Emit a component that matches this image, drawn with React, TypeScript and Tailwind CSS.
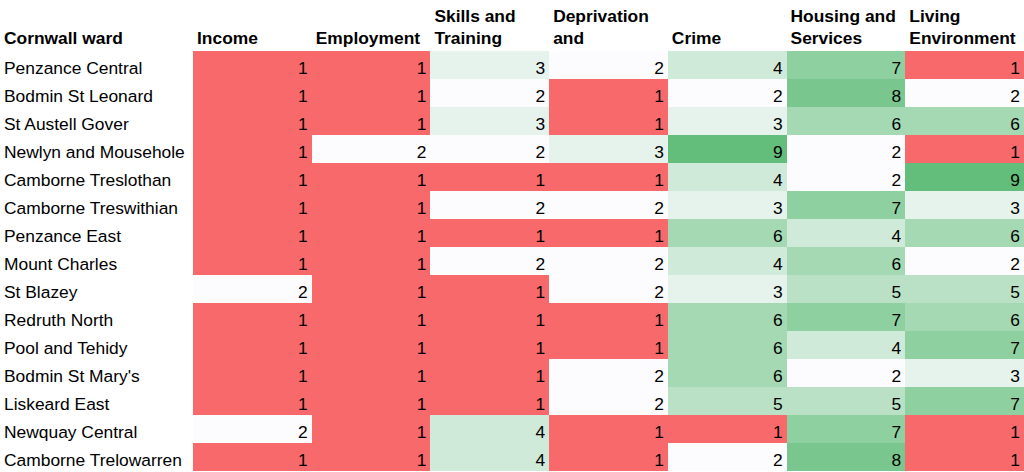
const columns: string[][] = [
  ["Income"],
  ["Employment"],
  ["Skills and", "Training"],
  ["Deprivation", "and"],
  ["Crime"],
  ["Housing and", "Services"],
  ["Living", "Environment"],
];

const rows: [string, number[]][] = [
  ["Penzance Central", [1, 1, 3, 2, 4, 7, 1]],
  ["Bodmin St Leonard", [1, 1, 2, 1, 2, 8, 2]],
  ["St Austell Gover", [1, 1, 3, 1, 3, 6, 6]],
  ["Newlyn and Mousehole", [1, 2, 2, 3, 9, 2, 1]],
  ["Camborne Treslothan", [1, 1, 1, 1, 4, 2, 9]],
  ["Camborne Treswithian", [1, 1, 2, 2, 3, 7, 3]],
  ["Penzance East", [1, 1, 1, 1, 6, 4, 6]],
  ["Mount Charles", [1, 1, 2, 2, 4, 6, 2]],
  ["St Blazey", [2, 1, 1, 2, 3, 5, 5]],
  ["Redruth North", [1, 1, 1, 1, 6, 7, 6]],
  ["Pool and Tehidy", [1, 1, 1, 1, 6, 4, 7]],
  ["Bodmin St Mary's", [1, 1, 1, 2, 6, 2, 3]],
  ["Liskeard East", [1, 1, 1, 2, 5, 5, 7]],
  ["Newquay Central", [2, 1, 4, 1, 1, 7, 1]],
  ["Camborne Trelowarren", [1, 1, 4, 1, 2, 8, 1]],
];

// excel style 3-colour scale: 1 red, 2 white, 9 green
const scale: Record<number, string> = {
  1: "bg-[#F8696B]",
  2: "bg-[#FCFCFF]",
  3: "bg-[#E6F3EC]",
  4: "bg-[#D0EAD9]",
  5: "bg-[#BAE1C6]",
  6: "bg-[#A5D9B4]",
  7: "bg-[#8FD0A1]",
  8: "bg-[#79C78E]",
  9: "bg-[#63BE7B]",
};

export default function App() {
  return (
    <div
      className="w-[1024px] h-[472px] bg-white text-black text-[17.4px] overflow-hidden"
      style={{ fontFamily: '"Liberation Sans", Arial, sans-serif' }}
    >
      <div className="grid grid-cols-[193px_repeat(7,1fr)]">
        {/* header row */}
        <div className="h-[51px] flex items-end pl-[4px] pb-[2px] font-bold leading-[22px]">
          Cornwall ward
        </div>
        {columns.map((lines, i) => (
          <div key={i} className="h-[51px] flex flex-col justify-end pl-[4px] pb-[2px] font-bold leading-[22px] whitespace-nowrap">
            {lines.map((l) => (
              <span key={l}>{l}</span>
            ))}
          </div>
        ))}

        {/* data rows */}
        {rows.map(([ward, vals]) => (
          <div key={ward} className="contents">
            <div className="h-[28px] flex items-end pl-[4px] leading-[22px] whitespace-nowrap">
              {ward}
            </div>
            {vals.map((v, j) => (
              <div
                key={j}
                className={`h-[28px] flex items-end justify-end pr-[4px] leading-[22px] ${scale[v]}`}
              >
                {v}
              </div>
            ))}
          </div>
        ))}
      </div>
    </div>
  );
}
